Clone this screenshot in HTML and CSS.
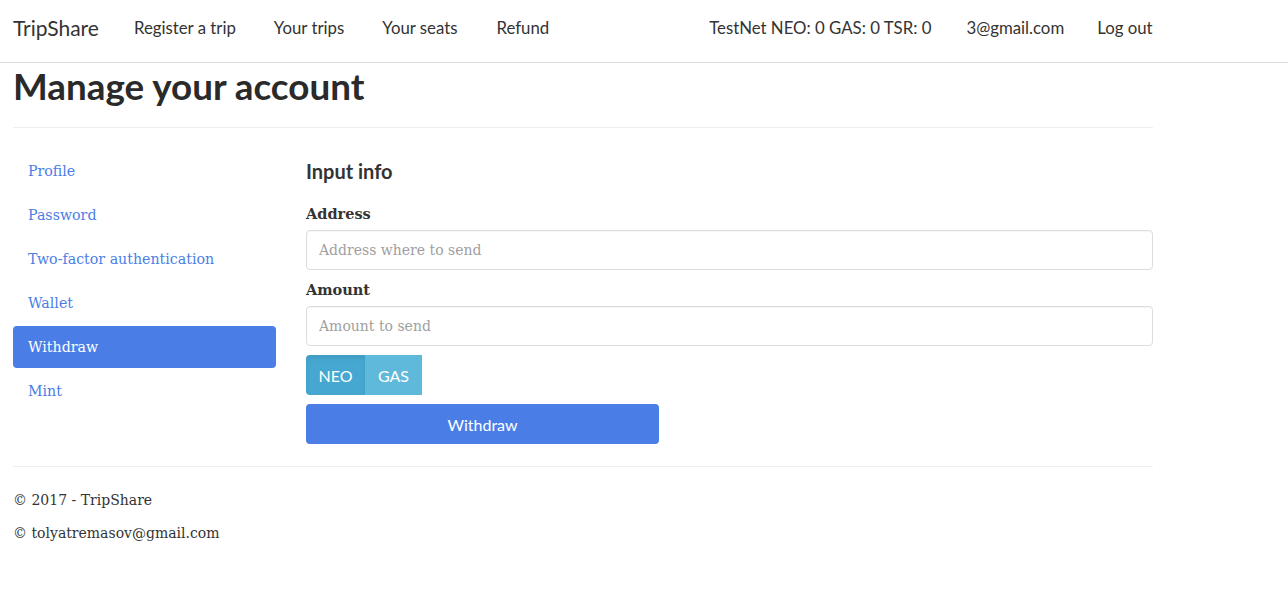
FILE: index.html
```html
<!DOCTYPE html>
<html>
<head>
<meta charset="utf-8">
<title>Manage your account - TripShare</title>
<link rel="stylesheet" href="styles.css">
</head>
<body>
<header class="navbar">
  <div class="navbar-inner">
    <a class="brand" href="#">TripShare</a>
    <ul class="nav nav-left">
      <li><a href="#">Register a trip</a></li>
      <li><a href="#">Your trips</a></li>
      <li><a href="#">Your seats</a></li>
      <li><a href="#">Refund</a></li>
    </ul>
    <ul class="nav nav-right">
      <li><a href="#">TestNet NEO: 0 GAS: 0 TSR: 0</a></li>
      <li><a href="#">3@gmail.com</a></li>
      <li><a href="#">Log out</a></li>
    </ul>
  </div>
</header>
<main class="container">
  <h2 class="page-title">Manage your account</h2>
  <hr class="rule">
  <div class="row">
    <nav class="side">
      <ul class="pills">
        <li><a href="#">Profile</a></li>
        <li><a href="#">Password</a></li>
        <li><a href="#">Two-factor authentication</a></li>
        <li><a href="#">Wallet</a></li>
        <li class="active"><a href="#">Withdraw</a></li>
        <li><a href="#">Mint</a></li>
      </ul>
    </nav>
    <section class="content">
      <h4 class="section-title">Input info</h4>
      <form class="form">
        <label class="label" for="addr">Address</label>
        <input class="input" id="addr" type="text" placeholder="Address where to send">
        <label class="label" for="amt">Amount</label>
        <input class="input" id="amt" type="text" placeholder="Amount to send">
        <div class="btn-group">
          <button type="button" class="btn-info active">NEO</button>
          <button type="button" class="btn-info">GAS</button>
        </div>
        <button type="button" class="btn-primary">Withdraw</button>
      </form>
    </section>
  </div>
  <hr class="rule footer-rule">
  <footer class="footer">
    <p>&copy; 2017 - TripShare</p>
    <p>&copy; tolyatremasov@gmail.com</p>
  </footer>
</main>
</body>
</html>
```
FILE: styles.css
```css
* { box-sizing: border-box; }
html, body { margin: 0; padding: 0; background: #fff; }
body {
  font-family: "DejaVu Serif", Georgia, serif;
  font-size: 14px;
  line-height: 1.42857;
  color: #333;
}
a { text-decoration: none; }
ul { list-style: none; margin: 0; padding: 0; }

.navbar {
  height: 63px;
  border-bottom: 1px solid #ddd;
  background: #fff;
}
.navbar-inner {
  display: flex;
  align-items: center;
  height: 62px;
  padding-left: 13px;
  padding-bottom: 6px;
  font-family: Lato, "Open Sans", sans-serif;
}
.brand {
  font-size: 21px;
  color: #333;
  padding-right: 16px;
}
.nav { display: flex; }
.nav a {
  display: block;
  color: #333;
  font-size: 16.8px;
  padding: 0 19px;
}
.nav-left li:nth-child(3) a { padding-right: 20px; }
.nav-right { margin-left: 122px; }
.nav-right li:nth-child(1) a { padding-right: 16px; }
.nav-right li:nth-child(2) a { padding-right: 16px; }
.nav-right li:nth-child(3) a { padding-left: 17px; }

.container {
  width: 1153px;
  padding-left: 13px;
}
.page-title {
  font-family: Lato, "Open Sans", sans-serif;
  font-weight: 700;
  font-size: 36.8px;
  line-height: 1.1;
  margin: 3px 0 0;
  color: #2a2a2a;
}
.rule {
  border: 0;
  border-top: 1px solid #eee;
  margin: 21px 0 0;
}
.row { display: flex; }
.side {
  width: 263px;
  margin-right: 30px;
  padding-top: 22px;
}
.pills li { margin-bottom: 2px; }
.pills a {
  display: block;
  height: 42px;
  line-height: 42px;
  padding: 0 15px;
  color: #4a7ee6;
  border-radius: 4px;
  font-size: 14.2px;
}
.pills .active a {
  background: #4a7ee6;
  color: #fff;
}
.content { width: 847px; padding-top: 32px; }
.section-title {
  font-family: Lato, "Open Sans", sans-serif;
  font-weight: 700;
  font-size: 20px;
  line-height: 1.1;
  margin: 0 0 23px;
  color: #333;
}
.form { display: flex; flex-direction: column; align-items: flex-start; }
.label {
  font-weight: 700;
  font-size: 14.5px;
  margin-bottom: 7px;
  line-height: 18px;
}
.input {
  width: 847px;
  height: 40px;
  border: 1px solid #ddd;
  border-radius: 4px;
  padding: 0 12px;
  font-family: "DejaVu Serif", Georgia, serif;
  font-size: 14px;
  color: #333;
  margin-bottom: 11px;
  box-shadow: inset 0 1px 1px rgba(0,0,0,0.04);
}
.input::placeholder { color: #a0a0a0; }
.btn-group { display: flex; margin-top: -2px; margin-bottom: 9px; }
.btn-info {
  height: 40px;
  border: 0;
  background: #5fb9da;
  color: #fff;
  font-family: Lato, "Open Sans", sans-serif;
  font-size: 16px;
  padding: 0 12px;
  width: 57px;
}
.btn-info.active {
  background: #46a8d0;
  border-radius: 4px 0 0 4px;
  width: 59px;
  box-shadow: inset 0 3px 5px rgba(0,0,0,0.08);
}
.btn-primary {
  width: 353px;
  height: 40px;
  border: 0;
  border-radius: 4px;
  background: #4a7ee6;
  color: #fff;
  font-family: Lato, "Open Sans", sans-serif;
  font-size: 16px;
}
.footer-rule { margin-top: 22px; }
.footer { padding-top: 22px; }
.footer p {
  margin: 0 0 10px;
  font-size: 14px;
  line-height: 23px;
}
```
